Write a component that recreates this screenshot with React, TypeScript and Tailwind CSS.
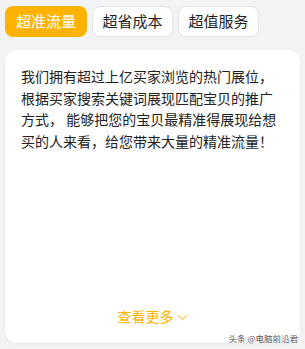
import React from "react";

export default function App() {
  const tabs = ["超准流量", "超省成本", "超值服务"];
  return (
    <div
      className="relative w-[305px] h-[349px] overflow-hidden bg-[#f2f3f5]"
      style={{ fontFamily: '"Noto Sans CJK SC", "Noto Sans", sans-serif' }}
    >
      <div className="flex gap-[5px] pl-[5px] pt-[6px]">
        {tabs.map((t, i) => (
          <div
            key={t}
            className={
              i === 0
                ? "flex h-[31px] w-[82px] items-center justify-center rounded-[8px] bg-[#ffb300] text-[15px] text-white"
                : "flex h-[31px] w-[81px] items-center justify-center rounded-[8px] border border-[#e3e4e8] bg-white text-[15px] text-[#222]"
            }
          >
            {t}
          </div>
        ))}
      </div>
      <div className="ml-[5px] mt-[13px] flex h-[293px] w-[295px] flex-col rounded-[12px] bg-white px-[16px] pt-[16px] pb-[17px] shadow-[0_1px_3px_rgba(0,0,0,0.06)]">
        <p className="text-[14px] leading-[21.5px] text-[#222]">
          我们拥有超过上亿买家浏览的热门展位，根据买家搜索关键词展现匹配宝贝的推广方式， 能够把您的宝贝最精准得展现给想买的人来看，给您带来大量的精准流量！
        </p>
        <div className="mt-auto flex items-center justify-center text-[14px] leading-[20px] text-[#ffb300]">
          <span>查看更多</span>
          <svg width="11" height="7" viewBox="0 0 11 7" className="ml-[3px] mt-[2px]">
            <path d="M1 1.2 L5.5 5.5 L10 1.2" fill="none" stroke="#ffc94d" strokeWidth="1.1" />
          </svg>
        </div>
      </div>
      <div
        className="absolute right-[7px] bottom-[6px] text-[8.5px] leading-[10px] text-[#555]"
        style={{ textShadow: "0 0 2px #fff, 0 0 2px #fff" }}
      >
        头条 @电脑前沿君
      </div>
    </div>
  );
}
